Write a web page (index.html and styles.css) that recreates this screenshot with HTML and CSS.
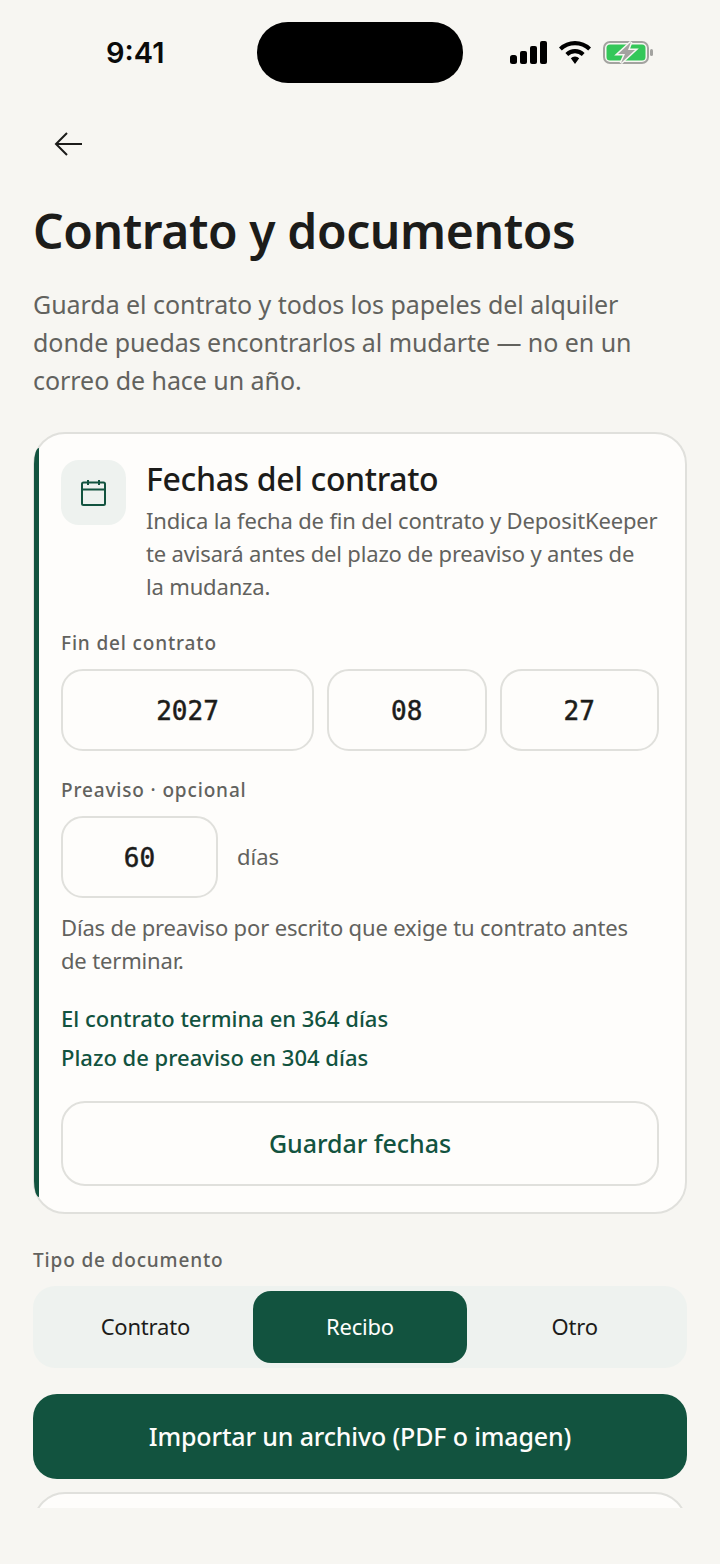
FILE: index.html
```html
<!DOCTYPE html>
<html lang="es">
<head>
<meta charset="utf-8">
<title>Contrato y documentos</title>
<link rel="stylesheet" href="styles.css">
</head>
<body>
<div class="phone">
  <header class="status">
    <span class="time">9:41</span>
    <div class="island"></div>
    <div class="status-icons">
      <svg class="sig" width="37" height="23" viewBox="0 0 37 23"><rect x="0" y="14" width="7" height="9" rx="2.5"/><rect x="10" y="10" width="7" height="13" rx="2"/><rect x="20" y="5" width="7" height="18" rx="2"/><rect x="30" y="0" width="7" height="23" rx="2"/></svg>
      <svg class="wifi" width="32" height="23" viewBox="0 0 32 23"><path d="M16 0a23 23 0 0 1 16 6.500l-2.800 3a19 19 0 0 0-26.400 0L0 6.500A23 23 0 0 1 16 0z"/><path d="M16 8a13.500 13.500 0 0 1 9.600 4l-2.800 3a9.500 9.500 0 0 0-13.600 0l-2.800-3A13.500 13.500 0 0 1 16 8z"/><path d="M16 15.500a6 6 0 0 1 4.200 1.700L16 23l-4.200-5.800a6 6 0 0 1 4.200-1.700z"/></svg>
      <svg class="batt" width="50" height="25" viewBox="0 -1 50 25"><rect x="1" y="1" width="44" height="21" rx="6" fill="none" stroke="#a3a3a0" stroke-width="2"/><rect x="3.500" y="3.500" width="39" height="16" rx="3.500" fill="#34c759"/><rect x="47" y="8" width="3" height="7" rx="1.500" fill="#a3a3a0"/><path d="M28 1 15 13h7l-4 9 14-13h-7z" fill="#a3a3a0" stroke="#f7f6f2" stroke-width="3" paint-order="stroke"/></svg>
    </div>
  </header>

  <main class="content">
    <button class="back" aria-label="Volver">
      <svg width="30" height="26" viewBox="0 0 30 26"><path d="M28 13H2M13 2 2 13l11 11" fill="none" stroke="#1c1c1a" stroke-width="2"/></svg>
    </button>
    <h1 class="title">Contrato y documentos</h1>
    <p class="lead">Guarda el contrato y todos los papeles del alquiler donde puedas encontrarlos al mudarte — no en un correo de hace un año.</p>

    <section class="card">
      <div class="card-head">
        <div class="icon-box">
          <svg width="26" height="28" viewBox="0 0 26 28"><g fill="none" stroke="#12533f" stroke-width="2"><rect x="1" y="3.500" width="23" height="22.500" rx="1.500"/><path d="M1 10.500h23M7 1v5M18 1v5"/></g></svg>
        </div>
        <div class="card-text">
          <h2 class="card-title">Fechas del contrato</h2>
          <p class="card-desc">Indica la fecha de fin del contrato y DepositKeeper te avisará antes del plazo de preaviso y antes de<br>la mudanza.</p>
        </div>
      </div>

      <label class="label">Fin del contrato</label>
      <div class="date-row">
        <div class="field f-year">2027</div>
        <div class="field f-small">08</div>
        <div class="field f-small">27</div>
      </div>

      <label class="label label-notice">Preaviso · opcional</label>
      <div class="notice-row">
        <div class="field f-notice">60</div>
        <span class="unit">días</span>
      </div>
      <p class="hint">Días de preaviso por escrito que exige tu contrato antes de terminar.</p>

      <p class="status-line first">El contrato termina en 364 días</p>
      <p class="status-line">Plazo de preaviso en 304 días</p>

      <button class="btn-outline">Guardar fechas</button>
    </section>

    <div class="label doc-label">Tipo de documento</div>
    <div class="segments">
      <div class="seg">Contrato</div>
      <div class="seg active">Recibo</div>
      <div class="seg">Otro</div>
    </div>

    <button class="btn-primary">Importar un archivo (PDF o imagen)</button>

    <div class="next-card"></div>
  </main>
</div>
</body>
</html>
```

FILE: styles.css
```css
* { box-sizing: border-box; }
html, body { margin: 0; padding: 0; }
body { background: #f7f6f2; font-family: "Noto Sans", "Open Sans", sans-serif; color: #1c1c1a; }
.phone { width: 720px; height: 1564px; overflow: hidden; background: #f7f6f2; }

.status { height: 106px; padding: 22px 67px 0 106px; display: flex; justify-content: space-between; align-items: flex-start; }
.time { font-family: Inter, sans-serif; font-weight: 600; font-size: 29px; line-height: 61px; width: 104px; color: #0a0a0a; }
.island { width: 206px; height: 61px; border-radius: 31px / 30px; background: #000; }
.status-icons { width: 143px; height: 60px; display: flex; align-items: center; justify-content: space-between; }
.sig, .wifi { fill: #000; }

.content { height: 1402px; overflow: hidden; padding: 0 33px; }
.back { display: block; width: 30px; height: 26px; margin: 25px 0 0 21px; padding: 0; border: 0; background: none; }
.title { margin: 44px 0 0; font-size: 48px; line-height: 60px; font-weight: 600; letter-spacing: -0.4px; color: #1c1c1a; }
.lead { margin: 24px 0 0; font-size: 25px; line-height: 38px; letter-spacing: -0.05px; color: #62625e; }

.card { position: relative; margin-top: 33px; height: 782px; padding: 26px 26px 0; background: #fefdfb; border: 2px solid #e0e0dc; border-radius: 32px; }
.card::before { content: ""; position: absolute; left: -1px; top: 14px; bottom: 15px; width: 5px; background: #12533f; border-radius: 5px 0 0 5px / 16px 0 0 16px; }
.card-head { display: flex; gap: 20px; }
.icon-box { flex: none; width: 65px; height: 65px; border-radius: 18px; background: #eef2ef; display: flex; align-items: center; justify-content: center; }
.card-title { margin: 0; font-size: 32px; line-height: 38px; font-weight: 500; letter-spacing: -0.35px; color: #1c1c1a; }
.card-desc { margin: 6px 0 0; font-size: 22px; line-height: 33px; letter-spacing: -0.16px; color: #62625e; }

.label { display: block; font-size: 19px; line-height: 24px; font-weight: 500; letter-spacing: 0.85px; color: #62625e; }
.card > .label { margin-top: 27px; }
.card > .label:first-of-type { margin-top: 28px; }
.date-row { display: flex; gap: 13px; margin-top: 14px; }
.field { height: 82px; padding-top: 1px; border: 2px solid #e0e0dc; border-radius: 22px; display: flex; align-items: center; justify-content: center; font-family: "DejaVu Sans Mono", monospace; font-weight: 400; font-size: 26px; -webkit-text-stroke: 0.5px #1c1c1a; background: #fefdfb; color: #1c1c1a; }
.f-year { flex: none; width: 253px; }
.f-small { flex: 1; }
.f-notice { width: 157px; }
.notice-row { display: flex; align-items: center; gap: 19px; margin-top: 14px; }
.unit { font-size: 22px; line-height: 30px; padding-bottom: 2px; color: #62625e; }
.hint { margin: 13px 0 0; font-size: 22px; line-height: 32.5px; letter-spacing: -0.16px; color: #62625e; }
.status-line { margin: 13px 0 0; font-size: 22px; line-height: 26px; font-weight: 500; color: #12533f; }
.status-line.first { margin-top: 29px; }
.btn-outline { display: block; width: 100%; height: 85px; margin-top: 31px; padding-bottom: 3px; border: 2px solid #e0e0dc; border-radius: 24px; background: #fefdfb; font: 500 25px "Noto Sans", sans-serif; letter-spacing: -0.05px; color: #12533f; }

.doc-label { margin-top: 34px; letter-spacing: 0.85px; }
.segments { display: flex; margin-top: 14px; height: 82px; padding: 5px; background: #eef2ef; border-radius: 22px; }
.seg { flex: 1; display: flex; align-items: center; justify-content: center; padding-bottom: 2px; font-size: 22px; letter-spacing: -0.2px; color: #1c1c1a; border-radius: 18px; }
.seg.active { background: #12533f; color: #fefdfb; }
.btn-primary { display: block; width: 100%; height: 85px; margin-top: 26px; padding-bottom: 3px; border: 0; border-radius: 24px; background: #12533f; font: 500 25px "Noto Sans", sans-serif; letter-spacing: -0.15px; color: #fefdfb; }
.next-card { height: 80px; margin-top: 13px; background: #fefdfb; border: 2px solid #e0e0dc; border-radius: 32px; }
```
